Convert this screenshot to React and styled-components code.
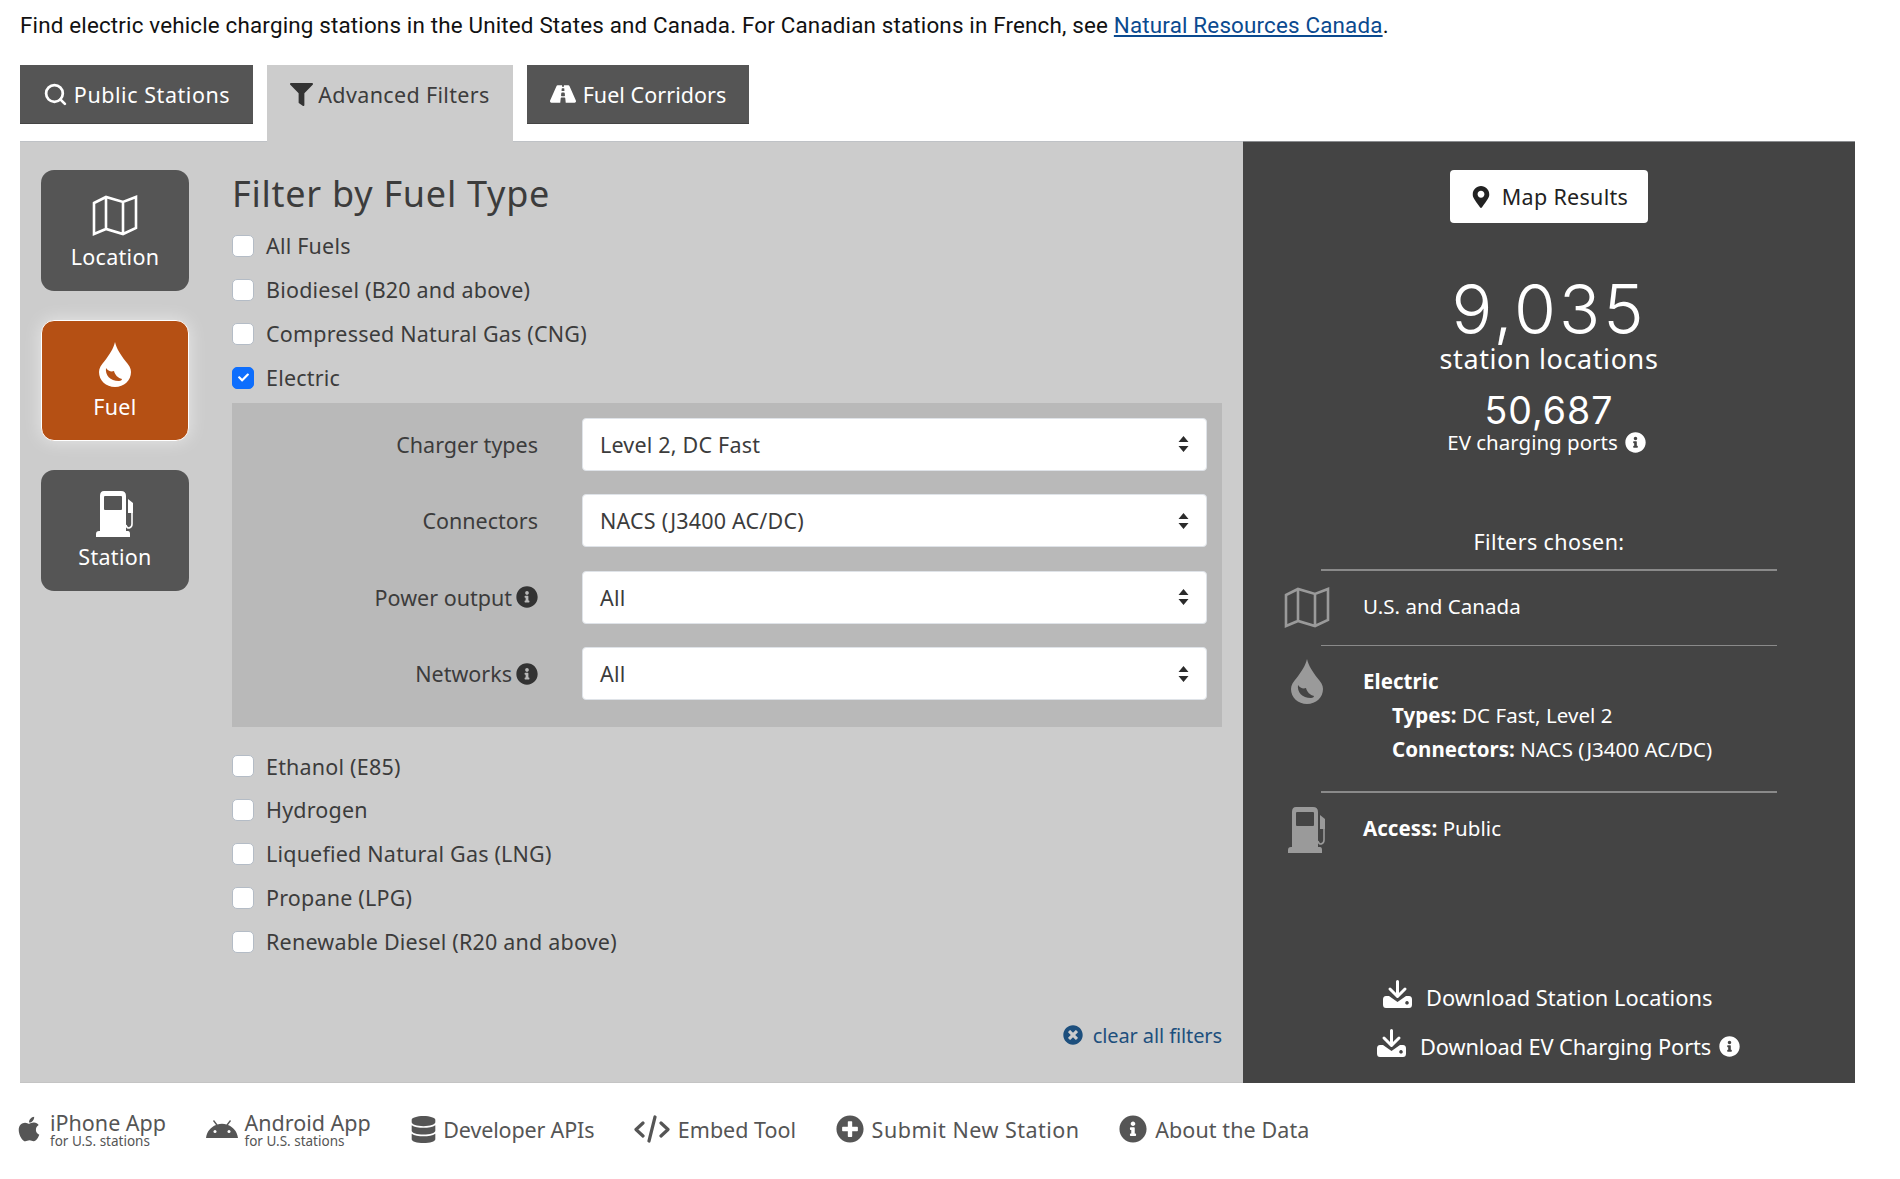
import React from "react";
import styled, { createGlobalStyle } from "styled-components";
import { Search } from "lucide-react";
import { FaFilter, FaRoad, FaMapMarkerAlt, FaApple, FaDatabase, FaPlusCircle, FaInfoCircle, FaTimesCircle, FaCheck } from "react-icons/fa";

const Global = createGlobalStyle`
  html, body { margin: 0; padding: 0; background: #fff; }
  body { font-family: "Noto Sans", sans-serif; }
  * { box-sizing: border-box; }
`;

const Page = styled.div`
  width: 1900px;
  height: 1179px;
  padding: 0 45px 0 20px;
  display: flex;
  flex-direction: column;
  overflow: hidden;
`;
const Intro = styled.p`
  margin: 0;
  height: 65px;
  padding-top: 10px;
  font: 400 22.4px/30px Roboto, sans-serif;
  letter-spacing: 0.17px;
  color: #111;
  a { color: #0b4a8f; text-decoration: underline; }
`;
const TabRow = styled.div`
  display: flex;
  align-items: flex-start;
  gap: 14px;
  height: 76px;
  flex: none;
`;
const Tab = styled.div`
  display: flex;
  align-items: center;
  justify-content: center;
  position: relative;
  z-index: 1;
  gap: ${p => p.$gap}px;
  width: ${p => p.$w}px;
  height: ${p => (p.$active ? "77px" : "59px")};
  padding-bottom: ${p => (p.$active ? "18px" : "0")};
  background: ${p => (p.$active ? "#ccc" : "#555")};
  color: ${p => (p.$active ? "#3c3c3c" : "#fff")};
  border-bottom: ${p => (p.$active ? "0" : "1px solid #444")};
  font-size: 21.5px;
  letter-spacing: ${p => p.$spacing}px;
`;
const Main = styled.div`
  display: flex;
  height: 942px;
  flex: none;
`;
const GrayPanel = styled.div`
  width: 1223px;
  background: #ccc;
  display: flex;
  padding: 29px 21px 0 21px;
  border-top: 1px solid #bfc2c6;
  border-bottom: 1px solid #c4c4c4;
`;
const Sidebar = styled.div`
  width: 148px;
  flex: none;
  display: flex;
  flex-direction: column;
  gap: 29px;
  margin-top: -1px;
`;
const SideButton = styled.div`
  height: 121px;
  border-radius: 13px;
  background: ${p => (p.$active ? "#b55014" : "#555")};
  border: ${p => (p.$active ? "1.5px solid #fff" : "0")};
  box-shadow: ${p => (p.$active ? "0 0 18px rgba(255,255,255,.55)" : "none")};
  color: #fff;
  display: flex;
  flex-direction: column;
  align-items: center;
  padding-top: ${p => p.$top}px;
  font-size: 21.5px;
  line-height: 30px;
  letter-spacing: 0.3px;
  svg { display: block; margin-bottom: ${p => p.$mb}px; flex: none; }
`;
const Content = styled.div`
  margin-left: 43px;
  margin-top: -2px;
  flex: 1;
  display: flex;
  flex-direction: column;
  min-width: 0;
`;
const Heading = styled.h2`
  margin: 3px 0 8px;
  height: 44px;
  flex: none;
  font-size: 36px;
  line-height: 44px;
  font-weight: 400;
  letter-spacing: 0.75px;
  color: #3c3c3c;
`;
const CheckRow = styled.label`
  height: 43.9px;
  flex: none;
  display: flex;
  align-items: center;
  gap: 12px;
  font-size: 21.5px;
  color: #3c3c3c;
  letter-spacing: 0.2px;
`;
const Box = styled.span`
  width: 22px;
  height: 22px;
  border-radius: 5px;
  background: ${p => (p.$checked ? "#0d6efd" : "#fff")};
  border: 1px solid ${p => (p.$checked ? "#0d6efd" : "#b4bcc6")};
  display: flex;
  align-items: center;
  justify-content: center;
  color: #fff;
  font-size: 11px;
`;
const SubPanel = styled.div`
  margin-top: 3px;
  background: #b9b9b9;
  height: 324px;
  flex: none;
  padding: 15px 15px 0 0;
  display: flex;
  flex-direction: column;
  gap: 23.6px;
  margin-bottom: 17.5px;
`;
const SelectRow = styled.div`
  display: flex;
  align-items: center;
  gap: 44px;
`;
const SelectLabel = styled.div`
  width: 306px;
  flex: none;
  display: flex;
  justify-content: flex-end;
  align-items: center;
  gap: 4px;
  font-size: 21.5px;
  color: #3c3c3c;
`;
const SelectBox = styled.div`
  flex: 1;
  height: 53px;
  border-radius: 4px;
  border: 1px solid #dfe3e8;
  background: #fff;
  display: flex;
  align-items: center;
  justify-content: space-between;
  padding: 0 17px 0 17px;
  font-size: 21.5px;
  color: #3c3c3c;
  letter-spacing: 0.2px;
`;
const ClearLink = styled.div`
  margin-top: auto;
  margin-bottom: 32px;
  align-self: flex-end;
  display: flex;
  align-items: center;
  gap: 10px;
  height: 30px;
  font-size: 20px;
  color: #1d4f7d;
  letter-spacing: -0.1px;
`;
const DarkPanel = styled.div`
  flex: 1;
  background: #444;
  color: #fff;
  display: flex;
  flex-direction: column;
  align-items: center;
  padding-top: 28px;
  border-top: 1px solid #8b8d90;
`;
const MapButton = styled.div`
  width: 198px;
  height: 53px;
  flex: none;
  border-radius: 4px;
  background: #fff;
  color: #222;
  display: flex;
  align-items: center;
  justify-content: center;
  gap: 10px;
  font-size: 21.5px;
  letter-spacing: 0.3px;
`;
const BigNumber = styled.div`
  margin-top: 51px;
  font-family: Inter, sans-serif;
  font-weight: 300;
  font-size: 68px;
  line-height: 71px;
  letter-spacing: 3px;
`;
const BigLabel = styled.div`
  font-size: 27px;
  line-height: 28px;
  letter-spacing: 0.6px;
`;
const MidNumber = styled.div`
  margin-top: 18px;
  font-family: Inter, sans-serif;
  font-size: 37.5px;
  line-height: 40px;
  letter-spacing: 1px;
`;
const MidLabel = styled.div`
  display: flex;
  align-items: center;
  gap: 7px;
  margin-right: 5px;
  font-size: 20.5px;
  line-height: 22px;
`;
const ChosenTitle = styled.div`
  margin-top: 77px;
  margin-bottom: 15px;
  font-size: 21.5px;
  line-height: 24px;
  letter-spacing: 0.4px;
`;
const Divider = styled.div`
  width: 456px;
  height: 1.5px;
  flex: none;
  background: #8a8a8a;
`;
const ChosenRow = styled.div`
  align-self: stretch;
  display: grid;
  grid-template-columns: 80px 1fr;
  padding: ${p => p.$pad}px 0 ${p => p.$padEnd}px 40px;
  font-size: 20.5px;
  line-height: 34px;
  letter-spacing: 0.05px;
  flex: none;
  b { font-weight: 700; }
`;
const ChosenIcon = styled.div`
  display: flex;
  justify-content: center;
  width: 46px;
  margin-top: ${p => p.$top}px;
  margin-left: 1px;
  height: 0;
`;
const Indented = styled.div`
  padding-left: 29px;
`;
const DownloadGroup = styled.div`
  margin-top: auto;
  padding-bottom: 22px;
  align-self: stretch;
  display: flex;
  flex-direction: column;
  gap: 19px;
`;
const DownloadRow = styled.div`
  display: flex;
  align-items: center;
  height: 30px;
  margin-left: ${p => p.$indent}px;
  gap: 14px;
  font-size: 21.8px;
  letter-spacing: ${p => p.$spacing}px;
  > svg { margin-top: -7px; }
`;
const InlineInfo = styled.span`
  display: inline-flex;
  margin-left: -6px;
`;
const Footer = styled.div`
  flex: 1;
  display: flex;
  align-items: center;
  gap: 39.5px;
  color: #555;
  font-size: 21.5px;
  padding-bottom: 4px;
`;
const FooterItem = styled.div`
  display: flex;
  align-items: center;
  gap: ${p => p.$gap ?? 9}px;
  letter-spacing: ${p => p.$spacing ?? 0}px;
`;
const AppleSlot = styled.span`
  display: inline-flex;
  margin-left: -5px;
`;
const AppText = styled.div`
  display: flex;
  flex-direction: column;
  line-height: 21px;
  margin-top: 2px;
  small { font-size: 13.5px; line-height: 16px; letter-spacing: 0; }
`;

const MapIcon = ({ w = 46, h = 41, color = "#fff" }) => (
  <svg width={w} height={h} viewBox="0 0 46 41" fill="none" stroke={color} strokeWidth="2.6" strokeLinejoin="miter">
    <path d="M2 8 L14 2 L31 7 L44 2 V33 L31 39 L14 34 L2 39Z M14 2 V34 M31 7 V39" />
  </svg>
);
const DropIcon = ({ w = 32, h = 45, color = "#fff", hole = "#b55014" }) => (
  <svg width={w} height={h} viewBox="0 0 32 45">
    <path fill={color} d="M16 0 C17.500 7 22 13 26 18.500 C30 23 32 26 32 30 C32 38.500 25 45 16 45 C7 45 0 38.500 0 30 C0 26 2 23 6 18.500 C10 13 14.500 7 16 0Z" />
    <path fill={hole} d="M7 26 C6 33 11 39 20 39 C21.500 39 23 38 23 37 C19 36 16 33 15 29 C12 30 9 29 7 26Z" />
  </svg>
);
const PumpIcon = ({ w = 39, h = 46, color = "#fff", hole = "#555" }) => (
  <svg width={w} height={h} viewBox="0 0 39 46">
    <path fill={color} d="M8 0 H25 Q30 0 30 5 V40 H32 Q34 40 34 43 V46 H0 V43 Q0 40 3 40 H4 V5 Q4 0 8 0Z" />
    <rect x="8" y="5" width="18" height="14" rx="1" fill={hole} />
    <path fill="none" stroke={color} strokeWidth="1.6" d="M30 34 C31 39 36 37 36 33 V21" />
    <path fill={color} d="M32 8 L37 12 V22 H32Z" />
  </svg>
);
const Updown = () => (
  <svg width="11" height="16" viewBox="0 0 11 16" fill="#2b2b2b">
    <path d="M5.500 0 L10.500 6 H.5Z M5.500 16 L10.500 10 H.5Z" />
  </svg>
);
const DownloadIcon = () => (
  <svg width="29" height="28" viewBox="0 0 29 28">
    <path fill="none" stroke="#fff" strokeWidth="3" strokeLinecap="round" strokeLinejoin="round" d="M14.500 1.500 V15.500 M7 9 L14.500 16.500 L22 9" />
    <path fill="#fff" fillRule="evenodd" d="M3 16 H6 L14.500 22 L23 16 H26 Q29 16 29 19.500 V24.500 Q29 28 26 28 H3 Q0 28 0 24.500 V19.500 Q0 16 3 16Z M24 21 a1.800 1.800 0 1 0 .01 0Z" />
  </svg>
);
const AndroidIcon = () => (
  <svg width="32" height="18" viewBox="0 0 32 18">
    <path fill="#555" d="M0 18 C1 11 5 7 10 5 L7 1 L8 0 L11.500 4.500 C14 3.500 18 3.500 20.500 4.500 L24 0 L25 1 L22 5 C27 7 31 11 32 18Z" />
    <circle cx="9" cy="11.500" r="1.500" fill="#fff" />
    <circle cx="23" cy="11.500" r="1.500" fill="#fff" />
  </svg>
);
const CodeIcon = () => (
  <svg width="36" height="28" viewBox="0 0 36 28" fill="none" stroke="#555" strokeWidth="3.200" strokeLinecap="round" strokeLinejoin="round">
    <path d="M9 8 L2 14.500 L9 21 M27 8 L34 14.500 L27 21 M21 2 L15 26" />
  </svg>
);

const Check = ({ children, checked }) => (
  <CheckRow>
    <Box $checked={checked}>{checked && <FaCheck />}</Box>
    {children}
  </CheckRow>
);
const Select = ({ label, value, info }) => (
  <SelectRow>
    <SelectLabel>
      {label}
      {info && <FaInfoCircle size={22} color="#333" />}
    </SelectLabel>
    <SelectBox>
      {value}
      <Updown />
    </SelectBox>
  </SelectRow>
);

export default function App() {
  return (
    <Page>
      <Global />
      <Intro>
        Find electric vehicle charging stations in the United States and Canada. For Canadian stations in French, see{" "}
        <a href="#nrc">Natural Resources Canada</a>.
      </Intro>
      <TabRow>
        <Tab $w={233} $gap={6} $spacing={0.55}>
          <Search size={25} strokeWidth={2.6} />
          Public Stations
        </Tab>
        <Tab $w={246} $active $gap={5} $spacing={0.35}>
          <FaFilter size={23} color="#333" />
          Advanced Filters
        </Tab>
        <Tab $w={222} $gap={7} $spacing={0.05}>
          <FaRoad size={26} />
          Fuel Corridors
        </Tab>
      </TabRow>
      <Main>
        <GrayPanel>
          <Sidebar>
            <SideButton $top={25} $mb={6}>
              <MapIcon />
              Location
            </SideButton>
            <SideButton $active $top={21} $mb={5}>
              <DropIcon />
              Fuel
            </SideButton>
            <SideButton $top={21} $mb={5}>
              <PumpIcon />
              Station
            </SideButton>
          </Sidebar>
          <Content>
            <Heading>Filter by Fuel Type</Heading>
            <Check>All Fuels</Check>
            <Check>Biodiesel (B20 and above)</Check>
            <Check>Compressed Natural Gas (CNG)</Check>
            <Check checked>Electric</Check>
            <SubPanel>
              <Select label="Charger types" value="Level 2, DC Fast" />
              <Select label="Connectors" value="NACS (J3400 AC/DC)" />
              <Select label="Power output" value="All" info />
              <Select label="Networks" value="All" info />
            </SubPanel>
            <Check>Ethanol (E85)</Check>
            <Check>Hydrogen</Check>
            <Check>Liquefied Natural Gas (LNG)</Check>
            <Check>Propane (LPG)</Check>
            <Check>Renewable Diesel (R20 and above)</Check>
            <ClearLink>
              <FaTimesCircle size={20} />
              clear all filters
            </ClearLink>
          </Content>
        </GrayPanel>
        <DarkPanel>
          <MapButton>
            <FaMapMarkerAlt size={22} />
            Map Results
          </MapButton>
          <BigNumber>9,035</BigNumber>
          <BigLabel>station locations</BigLabel>
          <MidNumber>50,687</MidNumber>
          <MidLabel>
            EV charging ports
            <FaInfoCircle size={21} />
          </MidLabel>
          <ChosenTitle>Filters chosen:</ChosenTitle>
          <Divider />
          <ChosenRow $pad={18} $padEnd={22}>
            <ChosenIcon $top={-2}>
              <MapIcon color="#9a9a9a" />
            </ChosenIcon>
            <div>U.S. and Canada</div>
          </ChosenRow>
          <Divider />
          <ChosenRow $pad={18} $padEnd={25}>
            <ChosenIcon $top={-5}>
              <DropIcon color="#9a9a9a" hole="#444" />
            </ChosenIcon>
            <div>
              <b>Electric</b>
              <Indented>
                <b>Types:</b> DC Fast, Level 2
              </Indented>
              <Indented>
                <b>Connectors:</b> NACS (J3400 AC/DC)
              </Indented>
            </div>
          </ChosenRow>
          <Divider />
          <ChosenRow $pad={18} $padEnd={0}>
            <ChosenIcon $top={-4}>
              <PumpIcon color="#9a9a9a" hole="#444" />
            </ChosenIcon>
            <div>
              <b>Access:</b> Public
            </div>
          </ChosenRow>
          <DownloadGroup>
            <DownloadRow $indent={140} $spacing={0.05}>
              <DownloadIcon />
              Download Station Locations
            </DownloadRow>
            <DownloadRow $indent={134} $spacing={-0.1}>
              <DownloadIcon />
              Download EV Charging Ports
              <InlineInfo>
                <FaInfoCircle size={21} />
              </InlineInfo>
            </DownloadRow>
          </DownloadGroup>
        </DarkPanel>
      </Main>
      <Footer>
        <FooterItem $gap={7}>
          <AppleSlot>
            <FaApple size={28} />
          </AppleSlot>
          <AppText>
            iPhone App
            <small>for U.S. stations</small>
          </AppText>
        </FooterItem>
        <FooterItem $gap={7}>
          <AndroidIcon />
          <AppText>
            Android App
            <small>for U.S. stations</small>
          </AppText>
        </FooterItem>
        <FooterItem $gap={6} $spacing={-0.15}>
          <FaDatabase size={27} />
          Developer APIs
        </FooterItem>
        <FooterItem $gap={8}>
          <CodeIcon />
          Embed Tool
        </FooterItem>
        <FooterItem $gap={8} $spacing={0.5}>
          <FaPlusCircle size={28} />
          Submit New Station
        </FooterItem>
        <FooterItem $gap={8} $spacing={0.1}>
          <FaInfoCircle size={28} />
          About the Data
        </FooterItem>
      </Footer>
    </Page>
  );
}
